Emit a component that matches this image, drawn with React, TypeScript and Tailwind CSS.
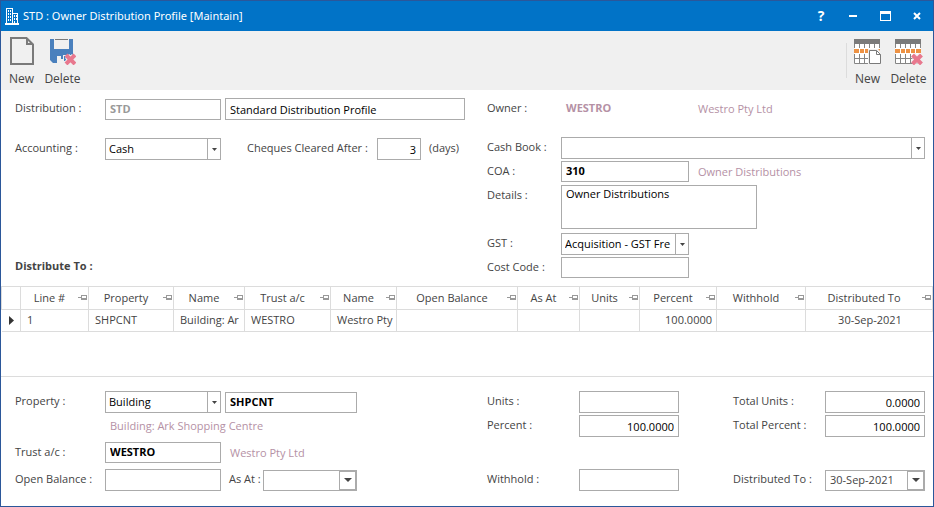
import type { ReactNode } from 'react';

const inputBase = 'border border-[#ababab] bg-white outline-none';

function BuildingIcon() {
  return (
    <svg width="14" height="17" viewBox="0 0 14 17" fill="none" shapeRendering="crispEdges">
      <path d="M1.500 16V.5h6V16M8 5.500h4.500V16" stroke="#fff" />
      <path d="M0 16h14" stroke="#fff" strokeWidth="2" />
      <path d="M3 2h1v2H3zM5 2h1v2H5zM3 5h1v2H3zM5 5h1v2H5zM3 8h1v2H3zM5 8h1v2H5zM3 11h1v2H3zM5 11h1v2H5zM9 7h1v2H9zM11 7h1v2h-1zM9 10h1v2H9zM11 10h1v2h-1zM9 13h1v2H9z" fill="#fff" />
    </svg>
  );
}

function PageIcon() {
  return (
    <svg width="24" height="28" viewBox="0 0 24 28" fill="none">
      <path d="M1 1h15.500l6.500 6.500V27H1z" stroke="#7a7a7a" strokeWidth="2" />
      <path d="M17 1v6h6" stroke="#7a7a7a" strokeWidth="2" />
    </svg>
  );
}

function SaveDeleteIcon() {
  return (
    <svg width="27" height="28" viewBox="0 0 27 28" fill="none">
      <path d="M1 2h4v10h15V2h4v16H14v4h-2v-3H8v7H4l-3-3z" fill="#4a80bd" />
      <path d="M15 19h2v5h-2z" fill="#4a80bd" />
      <path d="M6 2.500h13" stroke="#7a7a7a" />
      <path d="m18 19 7 7m0-7-7 7" stroke="#f0f0f0" strokeWidth="6" />
      <path d="m17 18 9 9m0-9-9 9" stroke="#e8788e" strokeWidth="4" />
    </svg>
  );
}

function GridIcon({ children }: { children: ReactNode }) {
  return (
    <svg width="28" height="28" viewBox="0 0 28 28" fill="none">
      <path d="M0 2h26v5H0z" fill="#7a7a7a" />
      <path d="M0 7h26v20H0z" fill="#fff" />
      <path d="M.5 7v19.500h25V7M5.500 7v19M10.500 7v19M15.500 7v19M20.500 7v19M0 21.500h26" stroke="#858585" />
      <path d="M0 11h26v6H0z" fill="#fff" />
      <path d="M0 12h5v4H0zM6 12h4v4H6zM11 12h4v4h-4zM16 12h4v4h-4zM21 12h5v4h-5z" fill="#ed9244" />
      {children}
    </svg>
  );
}

function GridNewIcon() {
  return (
    <GridIcon>
      <path d="M14 12h10l4 4v12H14z" fill="#f0f0f0" />
      <path d="M15.500 13.500h7l4 4v9h-11z" fill="#fff" stroke="#7a7a7a" />
      <path d="M22.500 13.500v4h4" stroke="#7a7a7a" />
    </GridIcon>
  );
}

function GridDeleteIcon() {
  return (
    <GridIcon>
      <path d="m18 18 8 8m0-8-8 8" stroke="#f0f0f0" strokeWidth="6" />
      <path d="m17.500 18 9 9m0-9-9 9" stroke="#e8788e" strokeWidth="4" />
    </GridIcon>
  );
}

function PinIcon() {
  return (
    <svg width="9" height="7" viewBox="0 0 9 7" fill="none" shapeRendering="crispEdges" className="mr-px shrink-0">
      <path d="M0 3.500h3M3.500 1v5M4 1.500h4.500v4H4M4 4.500h4" stroke="#999" />
    </svg>
  );
}

function Arrow({ big }: { big?: boolean }) {
  return (
    <svg width={big ? 8 : 5} height={big ? 4 : 3} viewBox="0 0 10 6" preserveAspectRatio="none">
      <path d="M0 0h10L5 6z" fill="#444" />
    </svg>
  );
}

function ToolButton({ label, icon }: { label: string; icon: ReactNode }) {
  return (
    <button type="button" className="flex w-[41px] flex-col items-center gap-[6px] pt-[6px] text-xs leading-4">
      {icon}
      <span>{label}</span>
    </button>
  );
}

type FieldProps = { id: string; label: string; labelWidth?: string; children: ReactNode };

function Field({ id, label, labelWidth = 'w-[90px]', children }: FieldProps) {
  return (
    <div className="flex items-center">
      <label htmlFor={id} className={`${labelWidth} shrink-0 whitespace-nowrap pb-[2px]`}>
        {label}
      </label>
      {children}
    </div>
  );
}

type InputProps = { id: string; value?: string; className?: string; label?: string };

function TextInput({ id, value = '', className = '', label }: InputProps) {
  return (
    <input
      id={id}
      aria-label={label}
      defaultValue={value}
      className={`${inputBase} h-[22px] px-1 text-black ${className}`}
    />
  );
}

// Code fields that look up another record, one pixel shorter than plain inputs
function LookupInput({ id, value = '', className = 'text-black', label }: InputProps) {
  return (
    <input
      id={id}
      aria-label={label}
      defaultValue={value}
      className={`${inputBase} h-[21px] px-1 pb-[2px] font-bold ${className}`}
    />
  );
}

function Select({ id, value = '', className = '' }: InputProps) {
  return (
    <div className={`relative ${className}`}>
      <select id={id} className={`${inputBase} block h-[22px] w-full appearance-none pl-[3px] pr-[14px] text-black`}>
        <option>{value}</option>
      </select>
      <span className="pointer-events-none absolute inset-y-0 right-0 flex w-[14px] items-center justify-center border border-[#ababab] bg-white">
        <Arrow />
      </span>
    </div>
  );
}

function DateInput({ id, value = '', className = '' }: InputProps) {
  return (
    <div className={`flex h-[21px] border border-[#ababab] bg-white ${className}`}>
      <input id={id} defaultValue={value} className="min-w-0 flex-1 bg-transparent px-1 outline-none" />
      <button type="button" aria-label="Open calendar" className="flex w-[17px] items-center justify-center border border-[#ababab]">
        <Arrow big />
      </button>
    </div>
  );
}

const columns = [
  { name: 'Line #', width: 'w-[68px]', value: '1' },
  { name: 'Property', width: 'w-[85px]', value: 'SHPCNT' },
  { name: 'Name', width: 'w-[71px]', value: 'Building: Ar' },
  { name: 'Trust a/c', width: 'w-[86px]', value: 'WESTRO' },
  { name: 'Name', width: 'w-[66px]', value: 'Westro Pty' },
  { name: 'Open Balance', width: 'w-[121px]', value: '' },
  { name: 'As At', width: 'w-[62px]', value: '' },
  { name: 'Units', width: 'w-[60px]', value: '' },
  { name: 'Percent', width: 'w-[77px]', value: '100.0000', align: 'text-right' },
  { name: 'Withhold', width: 'w-[89px]', value: '' },
  { name: 'Distributed To', width: '', value: '30-Sep-2021', align: 'text-center' },
];

function LinesTable() {
  return (
    <div className="min-h-[91px] border-b border-[#dcdcdc]">
      <table className="w-full table-fixed border-collapse">
        <thead>
          <tr className="h-[23px]">
            <th className="w-[19px] border border-[#dcdcdc]" aria-label="Current row" />
            {columns.map((col, i) => (
              <th key={i} className={`${col.width} border border-[#dcdcdc] p-0 pb-px font-normal`}>
                <div className="flex items-center">
                  <span className="flex-1 whitespace-nowrap">{col.name}</span>
                  <PinIcon />
                </div>
              </th>
            ))}
          </tr>
        </thead>
        <tbody>
          <tr className="h-[22px]">
            <td className="border-b border-r border-[#dcdcdc] p-0">
              <svg width="5" height="9" viewBox="0 0 5 9" className="ml-[7px]">
                <path d="M0 0l5 4.500L0 9z" fill="#333" />
              </svg>
            </td>
            {columns.map((col, i) => (
              <td
                key={i}
                className={`overflow-hidden whitespace-nowrap border border-[#dcdcdc] pb-[2px] pl-[6px] pr-1 pt-0 ${col.align ?? ''}`}
              >
                {col.value}
              </td>
            ))}
          </tr>
        </tbody>
      </table>
    </div>
  );
}

export default function App() {
  return (
    <div className="min-h-screen border border-[#2b579a] bg-white font-['Open_Sans','Noto_Sans',sans-serif] text-[11px] leading-4 text-[#444]">
      <header className="flex h-[30px] items-center bg-[#0173c7] pl-1 text-white">
        <BuildingIcon />
        <h1 className="ml-1 flex-1 font-['Noto_Sans',sans-serif]">STD : Owner Distribution Profile [Maintain]</h1>
        <button type="button" aria-label="Help" className="w-8 text-sm font-bold">?</button>
        <button type="button" aria-label="Minimize" className="flex h-7 w-8 items-center justify-center">
          <span className="h-[2px] w-2 bg-white" />
        </button>
        <button type="button" aria-label="Maximize" className="flex h-7 w-8 items-center justify-center">
          <span className="h-[10px] w-[11px] border border-t-[3px] border-white" />
        </button>
        <button type="button" aria-label="Close" className="flex h-7 w-8 items-center justify-center">
          <svg width="8" height="8" viewBox="0 0 8 8">
            <path d="m1 1 6 6m0-6L1 7" stroke="#fff" strokeWidth="2" />
          </svg>
        </button>
      </header>

      <div className="flex h-[59px] justify-between bg-[#f0f0f0]">
        <div className="flex">
          <ToolButton label="New" icon={<PageIcon />} />
          <ToolButton label="Delete" icon={<SaveDeleteIcon />} />
        </div>
        <div className="flex pr-1">
          <span className="my-3 w-px bg-[#dcdcdc]" />
          <ToolButton label="New" icon={<GridNewIcon />} />
          <ToolButton label="Delete" icon={<GridDeleteIcon />} />
        </div>
      </div>

      <main>
        {/* Profile details */}
        <section className="flex pb-2 pl-[14px] pr-2 pt-2">
          <div className="flex w-[472px] shrink-0 flex-col">
            <Field id="distribution" label="Distribution :">
              <LookupInput id="distribution" value="STD" className="w-[116px] text-[#999]" />
              <TextInput id="description" label="Description" value="Standard Distribution Profile" className="ml-1 w-[240px]" />
            </Field>
            <div className="mt-[18px] flex items-center">
              <Field id="accounting" label="Accounting :">
                <Select id="accounting" value="Cash" className="w-[116px]" />
              </Field>
              <div className="ml-[26px]">
                <Field id="cleared" label="Cheques Cleared After :" labelWidth="w-[130px]">
                  <TextInput id="cleared" value="3" className="w-11 text-right" />
                </Field>
              </div>
              <span className="ml-2 pb-[2px]">(days)</span>
            </div>
            <h2 className="mt-auto pb-1 font-bold">Distribute To :</h2>
          </div>

          <div className="flex min-w-0 flex-1 flex-col gap-[2px]">
            <div className="mb-[15px] flex h-[22px] items-center">
              <span className="w-[79px] pb-[2px]">Owner :</span>
              <span className="w-[132px] pb-[2px] font-bold text-[#b591a5]">WESTRO</span>
              <span className="text-[#b591a5]">Westro Pty Ltd</span>
            </div>
            <Field id="cashbook" label="Cash Book :" labelWidth="w-[74px]">
              <Select id="cashbook" className="flex-1" />
            </Field>
            <Field id="coa" label="COA :" labelWidth="w-[74px]">
              <LookupInput id="coa" value="310" className="w-32 text-black" />
              <span className="ml-[9px] text-[#b591a5]">Owner Distributions</span>
            </Field>
            <div className="flex h-[47px] items-start pt-px">
              <label htmlFor="details" className="w-[74px] pt-[2px]">Details :</label>
              <textarea
                id="details"
                defaultValue="Owner Distributions"
                className={`${inputBase} h-11 w-[196px] resize-none px-1 text-black`}
              />
            </div>
            <Field id="gst" label="GST :" labelWidth="w-[74px]">
              <Select id="gst" value="Acquisition - GST Fre" className="w-32" />
            </Field>
            <Field id="costcode" label="Cost Code :" labelWidth="w-[74px]">
              <LookupInput id="costcode" className="w-32 text-black" />
            </Field>
          </div>
        </section>

        <LinesTable />

        {/* Selected line */}
        <section className="flex pb-3 pl-[14px] pr-2 pt-[14px]">
          <div className="flex w-[472px] shrink-0 flex-col">
            <Field id="property" label="Property :">
              <Select id="property" value="Building" className="w-[116px]" />
              <LookupInput id="propertycode" label="Property code" value="SHPCNT" className="ml-1 w-[132px] text-black" />
            </Field>
            <p className="mb-2 mt-[5px] pl-[95px] text-[#b591a5]">Building: Ark Shopping Centre</p>
            <Field id="trust" label="Trust a/c :">
              <LookupInput id="trust" value="WESTRO" className="w-[116px] text-black" />
              <span className="ml-[9px] text-[#b591a5]">Westro Pty Ltd</span>
            </Field>
            <div className="mt-[6px] flex items-center">
              <Field id="openbalance" label="Open Balance :">
                <TextInput id="openbalance" className="w-[116px]" />
              </Field>
              <div className="ml-2">
                <Field id="asat" label="As At :" labelWidth="w-[34px]">
                  <DateInput id="asat" className="w-[94px]" />
                </Field>
              </div>
            </div>
          </div>

          <div className="flex flex-1 flex-col gap-[2px]">
            <div className="flex justify-between">
              <Field id="units" label="Units :" labelWidth="w-[92px]">
                <TextInput id="units" className="w-[100px] text-right" />
              </Field>
              <Field id="totalunits" label="Total Units :" labelWidth="w-[92px]">
                <TextInput id="totalunits" value="0.0000" className="w-[100px] text-right" />
              </Field>
            </div>
            <div className="flex justify-between">
              <Field id="percent" label="Percent :" labelWidth="w-[92px]">
                <TextInput id="percent" value="100.0000" className="w-[100px] text-right" />
              </Field>
              <Field id="totalpercent" label="Total Percent :" labelWidth="w-[92px]">
                <TextInput id="totalpercent" value="100.0000" className="w-[100px] text-right" />
              </Field>
            </div>
            <div className="mt-auto flex justify-between">
              <Field id="withhold" label="Withhold :" labelWidth="w-[92px]">
                <TextInput id="withhold" className="w-[100px]" />
              </Field>
              <Field id="distributedto" label="Distributed To :" labelWidth="w-[92px]">
                <DateInput id="distributedto" value="30-Sep-2021" className="w-[100px]" />
              </Field>
            </div>
          </div>
        </section>
      </main>
    </div>
  );
}
